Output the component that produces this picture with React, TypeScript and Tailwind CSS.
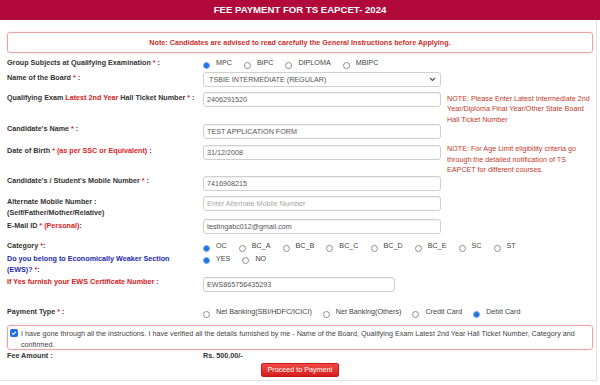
import React from 'react'
import clsx from 'clsx'

const Req = () => <span className="text-[#e01b1b]">*</span>

function Radio({ label, checked }: { label: string; checked?: boolean }) {
  return (
    <span className="flex items-center">
      <span
        className={clsx(
          'mt-[4px] w-[7px] h-[7px] rounded-full border shrink-0',
          checked ? 'border-[#7aaaf0] bg-[#2173e3]' : 'border-[#8c8c8c] bg-white'
        )}
      />
      <span className="ml-[6px] text-[#444] whitespace-nowrap">{label}</span>
    </span>
  )
}

function Field({ value, placeholder, w = 'w-[238px]' }: { value?: string; placeholder?: string; w?: string }) {
  return (
    <div className={clsx(w, 'h-[15px] border border-[#cfcfcf] rounded-[3px] px-[3px] flex items-center shadow-[inset_0_1px_1px_rgba(0,0,0,0.06)]')}>
      {value ? <span className="text-[#555]">{value}</span> : <span className="text-[#a8a8a8]">{placeholder}</span>}
    </div>
  )
}

const row = 'grid grid-cols-[196px_238px_1fr]'

export default function App() {
  return (
    <div className="w-[600px] h-[385px] bg-white font-['Liberation_Sans',Arial,sans-serif] text-[7.2px] leading-[10px] text-[#333]">
      {/* Title bar */}
      <div className="h-[20px] bg-[#b0093a] flex items-center justify-center text-white font-bold text-[9.6px]">
        FEE PAYMENT FOR TS EAPCET- 2024
      </div>

      <div className="w-[597px] h-[361px] border-r border-b border-[#e2e2e2] pl-[7px] pr-[3px] pt-[12px]">
        {/* Note */}
        <div className="h-[21px] border border-[#eba3a3] rounded-[3px] flex items-center justify-center font-bold text-[#c9302c] shadow-[0_0_2px_rgba(220,120,120,0.3)]">
          Note: Candidates are advised to read carefully the General Instructions before Applying.
        </div>

        {/* Group subjects */}
        <div className={clsx(row, 'mt-[4px] h-[12px] items-center')}>
          <div className="font-bold">Group Subjects at Qualifying Examination <Req /> :</div>
          <div className="col-span-2 flex gap-[12px]">
            <Radio label="MPC" checked />
            <Radio label="BiPC" />
            <Radio label="DIPLOMA" />
            <Radio label="MBIPC" />
          </div>
        </div>

        {/* Board */}
        <div className={clsx(row, 'mt-[3px] h-[15px] items-start')}>
          <div className="font-bold pt-[1px]">Name of the Board <Req /> :</div>
          <div className="w-[238px] h-[15px] border border-[#cfcfcf] rounded-[3px] pl-[5px] pr-[3px] flex items-center justify-between text-[#555]">
            <span>TSBIE INTERMEDIATE (REGULAR)</span>
            <svg width="7" height="5" viewBox="0 0 7 5" className="mr-[1px]">
              <path d="M1 1l2.5 2.5L6 1" fill="none" stroke="#555" strokeWidth="1.2" />
            </svg>
          </div>
        </div>

        {/* Hall ticket */}
        <div className={clsx(row, 'mt-[5px] h-[29px] items-start')}>
          <div className="font-bold pt-[1px]">
            Qualifying Exam <span className="text-[#d01c1c]">Latest 2nd Year</span> Hall Ticket Number <Req /> :
          </div>
          <Field value="2406291520" />
          <div className="pl-[6px] pt-[1.5px] leading-[10.5px] text-[#c0392b] whitespace-nowrap">
            NOTE: Please Enter Latest Intermediate 2nd<br />
            Year/Diploma Final Year/Other State Board<br />
            Hall Ticket Number
          </div>
        </div>

        {/* Name */}
        <div className={clsx(row, 'mt-[3px] h-[15px] items-start')}>
          <div className="font-bold">Candidate's Name <Req /> :</div>
          <Field value="TEST APPLICATION FORM" />
        </div>

        {/* DOB */}
        <div className={clsx(row, 'mt-[6px] h-[15px] items-start')}>
          <div className="font-bold pt-[1px]">
            Date of Birth <span className="text-[#e01b1b]">* (as per SSC or Equivalent)</span> :
          </div>
          <Field value="31/12/2008" />
          <div className="pl-[6px] -mt-[1px] leading-[10.5px] text-[#c0392b] whitespace-nowrap">
            NOTE: For Age Limit eligibility criteria go<br />
            through the detailed notification of TS<br />
            EAPCET for different courses.
          </div>
        </div>

        {/* Mobile */}
        <div className={clsx(row, 'mt-[16px] h-[15px] items-start')}>
          <div className="font-bold">Candidate's / Student's Mobile Number <Req /> :</div>
          <Field value="7416908215" />
        </div>

        {/* Alternate mobile */}
        <div className={clsx(row, 'mt-[5px] h-[22px] items-start')}>
          <div className="font-bold leading-[11px]">
            Alternate Mobile Number :<br />(Self/Father/Mother/Relative)
          </div>
          <Field placeholder="Enter Alternate Mobile Number" />
        </div>

        {/* Email */}
        <div className={clsx(row, 'mt-[1px] h-[15px] items-start')}>
          <div className="font-bold pt-[2px]">
            E-Mail ID <span className="text-[#e01b1b]">* (Personal)</span>:
          </div>
          <Field value="testingabc012@gmail.com" />
        </div>

        {/* Category */}
        <div className={clsx(row, 'mt-[6px] h-[12px] items-center')}>
          <div className="font-bold">Category <Req />:</div>
          <div className="col-span-2 flex gap-[12px]">
            <Radio label="OC" checked />
            <Radio label="BC_A" />
            <Radio label="BC_B" />
            <Radio label="BC_C" />
            <Radio label="BC_D" />
            <Radio label="BC_E" />
            <Radio label="SC" />
            <Radio label="ST" />
          </div>
        </div>

        {/* EWS */}
        <div className={clsx(row, 'mt-[1px] h-[22px] items-start')}>
          <div className="font-bold leading-[11px] text-[#1c2aa8]">
            Do you belong to Economically Weaker Section<br />(EWS)? <Req />:
          </div>
          <div className="col-span-2 h-[11px] flex items-center gap-[12px]">
            <Radio label="YES" checked />
            <Radio label="NO" />
          </div>
        </div>

        {/* EWS certificate */}
        <div className={clsx(row, 'mt-[2px] h-[15px] items-start')}>
          <div className="font-bold text-[#d41717]">If Yes furnish your EWS Certificate Number :</div>
          <Field value="EWS865756435293" w="w-[192px]" />
        </div>

        {/* Payment type */}
        <div className={clsx(row, 'mt-[14px] h-[12px] items-center')}>
          <div className="font-bold">Payment Type <Req /> :</div>
          <div className="col-span-2 flex gap-[11px]">
            <Radio label="Net Banking(SBI/HDFC/ICICI)" />
            <Radio label="Net Banking(Others)" />
            <Radio label="Credit Card" />
            <Radio label="Debit Card" checked />
          </div>
        </div>

        {/* Declaration */}
        <div className="mt-[7px] h-[25px] border border-[#eba3a3] rounded-[3px] pl-[2px] pt-[1.5px] flex items-start leading-[11px] text-[#444] shadow-[0_0_2px_rgba(220,120,120,0.3)]">
          <span className="mt-[1.5px] w-[8px] h-[8px] rounded-[2px] bg-[#1f6fe0] flex items-center justify-center shrink-0">
            <svg width="6" height="6" viewBox="0 0 6 6">
              <path d="M1 3.2l1.3 1.3L5 1.6" fill="none" stroke="white" strokeWidth="1.1" />
            </svg>
          </span>
          <div className="ml-[3px]">
            <span className="whitespace-nowrap">
              {' '}I have gone through all the instructions. I have verified all the details furnished by me - Name of the Board, Qualifying Exam Latest 2nd Year Hall Ticket Number, Category and
            </span>
            <br />
            confirmed.
          </div>
        </div>

        {/* Fee */}
        <div className={clsx(row, 'mt-[1px] h-[10px] items-center font-bold')}>
          <div>Fee Amount :</div>
          <div>Rs. 500.00/-</div>
        </div>

        <div className="mt-[2px] flex justify-center">
          <button className="w-[78px] h-[14px] rounded-[2px] bg-gradient-to-b from-[#f24a44] to-[#d41c1c] border border-[#c81818] text-white text-[7.2px] leading-[10px] flex items-center justify-center">
            Proceed to Payment
          </button>
        </div>
      </div>
    </div>
  )
}
